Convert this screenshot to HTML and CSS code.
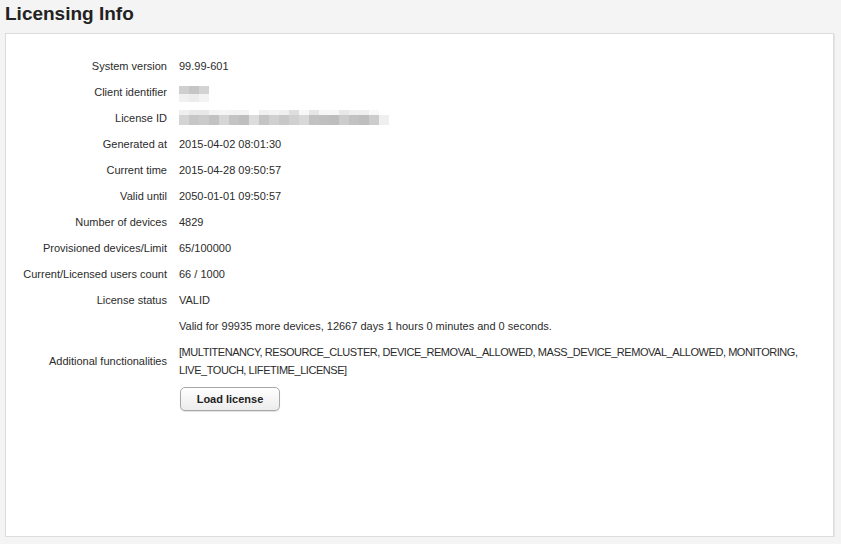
FILE: index.html
```html
<!DOCTYPE html>
<html><head>
<meta charset='utf-8' />
<title>Licensing Info</title>
<link rel="stylesheet" href="styles.css">
</head><body>

<h1 class='page_title'>Licensing Info</h1>

<section class='panel'>
	<div class='info_grid'>
		<div class='lbl'>System version</div>
		<div class='val'>99.99-601</div>

		<div class='lbl'>Client identifier</div>
		<div class='val'><span class='blur blur_client'></span></div>

		<div class='lbl'>License ID</div>
		<div class='val'><span class='blur blur_license'></span></div>

		<div class='lbl'>Generated at</div>
		<div class='val'>2015-04-02 08:01:30</div>

		<div class='lbl'>Current time</div>
		<div class='val'>2015-04-28 09:50:57</div>

		<div class='lbl'>Valid until</div>
		<div class='val'>2050-01-01 09:50:57</div>

		<div class='lbl'>Number of devices</div>
		<div class='val'>4829</div>

		<div class='lbl'>Provisioned devices/Limit</div>
		<div class='val'>65/100000</div>

		<div class='lbl'>Current/Licensed users count</div>
		<div class='val'>66 / 1000</div>

		<div class='lbl'>License status</div>
		<div class='val'>VALID</div>

		<div class='lbl'></div>
		<div class='val'>Valid for 99935 more devices, 12667 days 1 hours 0 minutes and 0 seconds.</div>

		<div class='lbl'>Additional functionalities</div>
		<div class='val val_list'>[MULTITENANCY, RESOURCE_CLUSTER, DEVICE_REMOVAL_ALLOWED, MASS_DEVICE_REMOVAL_ALLOWED, MONITORING, LIVE_TOUCH, LIFETIME_LICENSE]</div>

		<div class='lbl'></div>
		<div class='val'><button type='button' class='btn'>Load license</button></div>
	</div>
</section>

</body></html>
```

FILE: styles.css
```css
:root {
	--page-bg-color   : #f4f4f4;
	--panel-bg-color  : #ffffff;
	--border-color    : #dcdcdc;
	--text-color      : #2b2b2b;
	--title-color     : #222222;
}
body {
	margin           : 0;
	background-color : var(--page-bg-color);
	color            : var(--text-color);
	font-family      : "Liberation Sans", Arial, sans-serif;
	font-size        : 11px;
}
.page_title {
	margin      : 3px 0 8px 5px;
	font-size   : 19px;
	line-height : 22px;
	font-weight : bold;
	color       : var(--title-color);
}
.panel {
	margin           : 0 7px 0 5px;
	height           : 483px;
	padding          : 19px 12px 0 0;
	background-color : var(--panel-bg-color);
	border           : 1px solid var(--border-color);
	box-shadow       : 1px 1px 0 #e4e4e4;
}
.info_grid {
	display               : grid;
	grid-template-columns : 161px 1fr;
	column-gap            : 12px;
	align-items           : center;
}
.lbl , .val {
	padding     : 4px 0;
	line-height : 18px;
	min-height  : 18px;
}
.lbl {
	text-align : right;
}
/* the list wraps after MONITORING in the original, its underscores are narrower */
.val_list {
	letter-spacing : -0.45px;
}
.blur {
	display        : inline-block;
	vertical-align : top;
}
/* pixelated, top band lighter than bottom band */
.blur_client {
	width         : 30px;
	height        : 16px;
	margin-top    : 3px;
	margin-bottom : -1px;
	background    :
		linear-gradient(to right, #cfcfcf 0 10px, #c5c5c5 10px 20px, #d3d3d3 20px 30px) top / 30px 8px no-repeat,
		linear-gradient(to right, #f0f0f0 0 10px, #ececec 10px 20px, #f3f3f3 20px 30px) bottom / 30px 8px no-repeat;
}
.blur_license {
	width      : 210px;
	height     : 15px;
	margin-top : 1px;
	background :
		linear-gradient(to right,
			#efefef 0 10px,     #e8e8e8 10px 20px,  #e8e8e8 20px 30px,  #f3f3f3 30px 40px,
			#f5f5f5 40px 50px,  #f3f3f3 50px 60px,  #f3f3f3 60px 70px,  #ffffff 70px 80px,
			#f0f0f0 80px 90px,  #f3f3f3 90px 100px, #efefef 100px 110px,#dedede 110px 120px,
			#f7f7f7 120px 130px,#e6e6e6 130px 140px,#f7f7f7 140px 150px,#f7f7f7 150px 160px,
			#e8e8e8 160px 170px,#efefef 170px 180px,#efefef 180px 190px,#f8f8f8 190px 200px,
			#ffffff 200px 210px) top / 210px 5px no-repeat,
		linear-gradient(to right,
			#d4d4d4 0 10px,     #c6c6c6 10px 20px,  #cbcbcb 20px 30px,  #c2c2c2 30px 40px,
			#d6d6d6 40px 50px,  #c4c4c4 50px 60px,  #bfbfbf 60px 70px,  #dcdcdc 70px 80px,
			#c4c4c4 80px 90px,  #d0d0d0 90px 100px, #c8c8c8 100px 110px,#d0d0d0 110px 120px,
			#d8d8d8 120px 130px,#c2c2c2 130px 140px,#c0c0c0 140px 150px,#bdbdbd 150px 160px,
			#cccccc 160px 170px,#c2c2c2 170px 180px,#bebebe 180px 190px,#cccccc 190px 200px,
			#efefef 200px 210px) bottom / 210px 10px no-repeat;
}
.btn {
	display       : block;
	width         : 100px;
	height        : 24px;
	margin-left   : 1px;
	padding       : 0;
	font-family   : "Liberation Sans", Arial, sans-serif;
	font-size     : 11px;
	font-weight   : bold;
	color         : #222;
	background    : linear-gradient(#ffffff, #ececec);
	border        : 1px solid #a8a8a8;
	border-radius : 5px;
	box-shadow    : 0 1px 1px rgba(0,0,0,0.12);
}
```
